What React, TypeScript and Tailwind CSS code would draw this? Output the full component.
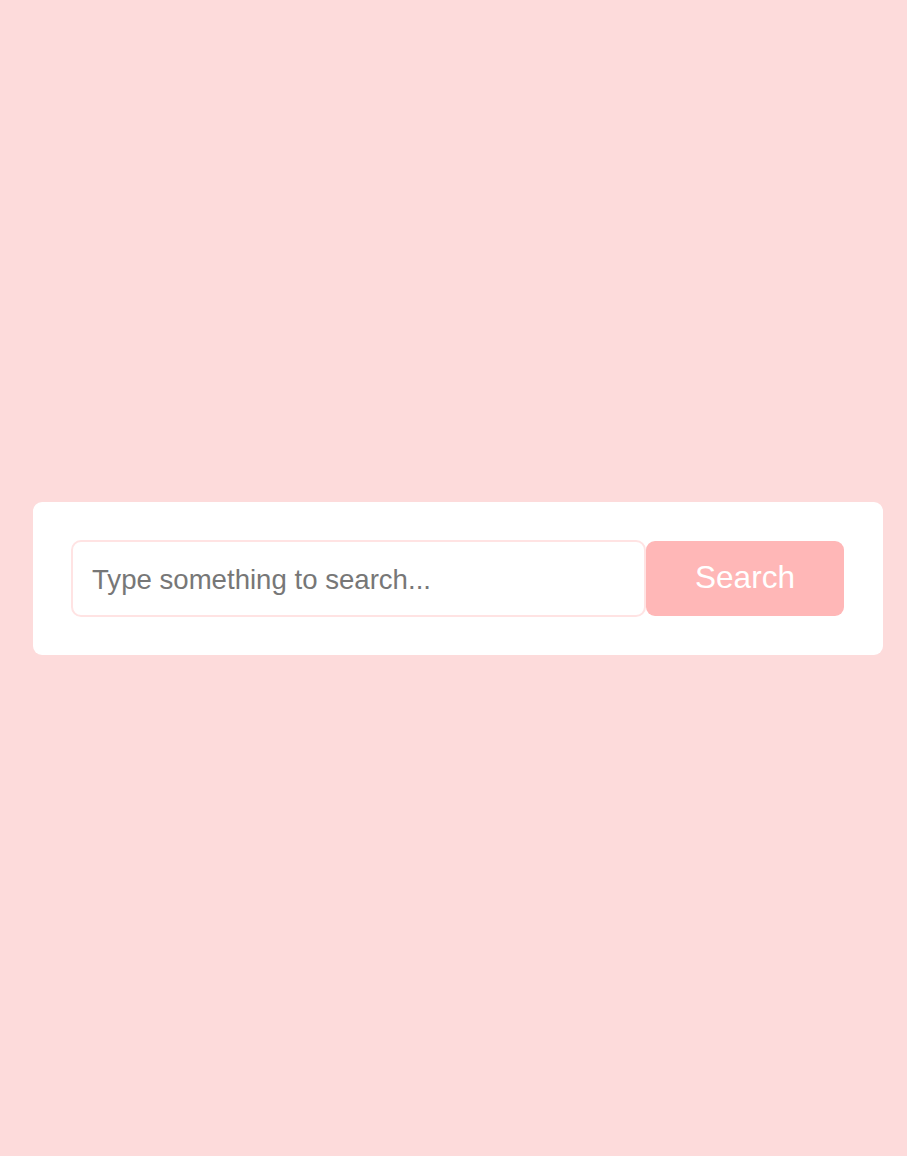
export default function App() {
  return (
    <div className="min-h-[1156px] bg-[#fddbdb] flex items-center font-['Liberation_Sans',Arial,sans-serif]">
      <div className="ml-[33px] w-[850px] bg-white rounded-[9px] py-[38px] pl-[38px] pr-[39px] flex items-stretch">
        <input
          autoFocus
          type="text"
          placeholder="Type something to search..."
          className="flex-1 h-[77px] rounded-[10px] border-2 border-[#ffe3e3] px-[19px] pt-[3px] text-[27.6px] text-gray-800 placeholder:text-[#777777] outline-none"
        />
        <button className="w-[198px] h-[75px] mt-px rounded-[9px] bg-[#ffb7b7] text-white text-[31.5px]">
          Search
        </button>
      </div>
    </div>
  );
}
